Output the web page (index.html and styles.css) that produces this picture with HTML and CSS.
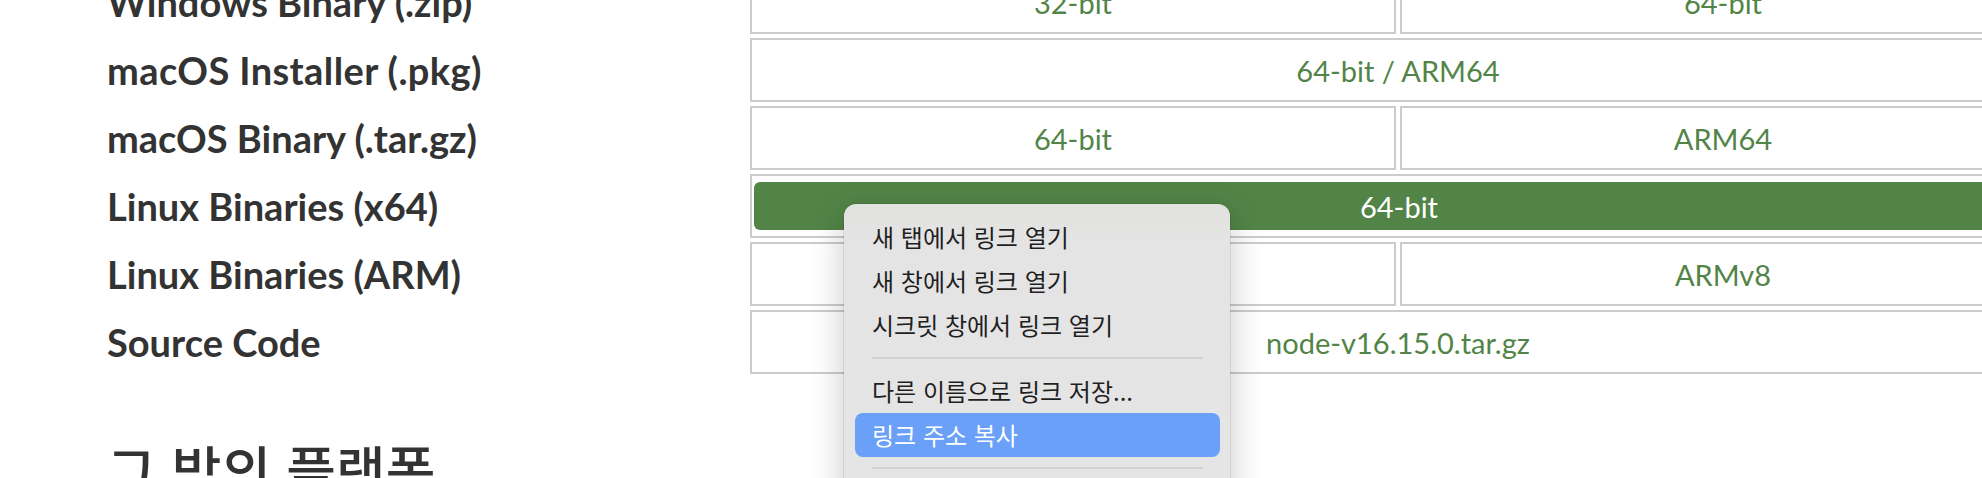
FILE: index.html
```html
<!DOCTYPE html>
<html lang="ko">
<head>
<meta charset="utf-8">
<title>Downloads</title>
<link rel="stylesheet" href="styles.css">
</head>
<body>
<main class="page">
  <div class="matrix">
    <div class="label">Windows Binary (.zip)</div>
    <div class="cell"><a href="#">32-bit</a></div>
    <div class="cell"><a href="#">64-bit</a></div>

    <div class="label">macOS Installer (.pkg)</div>
    <div class="cell wide"><a href="#">64-bit / ARM64</a></div>

    <div class="label">macOS Binary (.tar.gz)</div>
    <div class="cell"><a href="#">64-bit</a></div>
    <div class="cell"><a href="#">ARM64</a></div>

    <div class="label">Linux Binaries (x64)</div>
    <div class="cell wide active"><a href="#">64-bit</a></div>

    <div class="label">Linux Binaries (ARM)</div>
    <div class="cell"><a href="#">ARMv7</a></div>
    <div class="cell"><a href="#">ARMv8</a></div>

    <div class="label">Source Code</div>
    <div class="cell wide"><a href="#">node-v16.15.0.tar.gz</a></div>
  </div>

  <h2 class="section-title">그 밖의 플랫폼</h2>
</main>

<div class="context-menu">
  <div class="menu-item">새 탭에서 링크 열기</div>
  <div class="menu-item">새 창에서 링크 열기</div>
  <div class="menu-item">시크릿 창에서 링크 열기</div>
  <div class="menu-sep"></div>
  <div class="menu-item">다른 이름으로 링크 저장...</div>
  <div class="menu-item selected">링크 주소 복사</div>
  <div class="menu-sep"></div>
  <div class="menu-item">검사</div>
</div>
</body>
</html>
```
FILE: styles.css
```css
html, body {
  margin: 0;
  padding: 0;
  width: 1982px;
  height: 478px;
  overflow: hidden;
  background: #ffffff;
}

body {
  position: relative;
  font-family: "Lato", "Noto Sans CJK KR", sans-serif;
  color: #333333;
}

.page {
  margin-top: -30px;
  padding-left: 107px;
}

.matrix {
  display: grid;
  grid-template-columns: 639px 646px 646px;
  grid-auto-rows: 64px;
  gap: 4px;
}

.label {
  display: flex;
  align-items: center;
  font-size: 38px;
  font-weight: 700;
  color: #333333;
  white-space: nowrap;
}

.label:nth-child(4) {
  letter-spacing: 0.4px;
}

.cell {
  box-sizing: border-box;
  border: 2px solid #cccccc;
  display: flex;
  align-items: center;
  justify-content: center;
}

.cell.wide {
  grid-column: span 2;
}

.cell a {
  color: #528447;
  text-decoration: none;
  font-size: 29px;
  font-weight: 400;
}

.cell.active {
  padding: 6px 0 6px 2px;
  align-items: stretch;
  justify-content: stretch;
}

.cell.active a {
  flex: 1;
  display: flex;
  align-items: center;
  justify-content: center;
  background: #528447;
  color: #ffffff;
  border-radius: 6px;
}

.section-title {
  margin: 63px 0 0 0;
  font-family: "Noto Sans CJK KR", sans-serif;
  font-size: 54px;
  font-weight: 500;
  line-height: 64px;
  color: #333333;
}

.context-menu {
  position: absolute;
  left: 844px;
  top: 204px;
  width: 386px;
  height: 320px;
  box-sizing: border-box;
  padding: 11px 10px 0 11px;
  background: linear-gradient(to bottom, #e0e2de 0px, #e5e4e5 40px, #e6e5e6 100%);
  border-radius: 12px;
  box-shadow: 0 0 0 1px rgba(0, 0, 0, 0.08), 0 10px 34px rgba(0, 0, 0, 0.22);
  font-family: "Noto Sans CJK KR", sans-serif;
}

.menu-item {
  height: 44px;
  line-height: 44px;
  padding: 0 17px;
  font-size: 24px;
  color: #1f1f1f;
  border-radius: 8px;
  white-space: nowrap;
}

.menu-item.selected {
  background: #6aa0f7;
  color: #ffffff;
}

.menu-sep {
  height: 2px;
  margin: 10px 17px;
  background: #d3d2d3;
}
```
